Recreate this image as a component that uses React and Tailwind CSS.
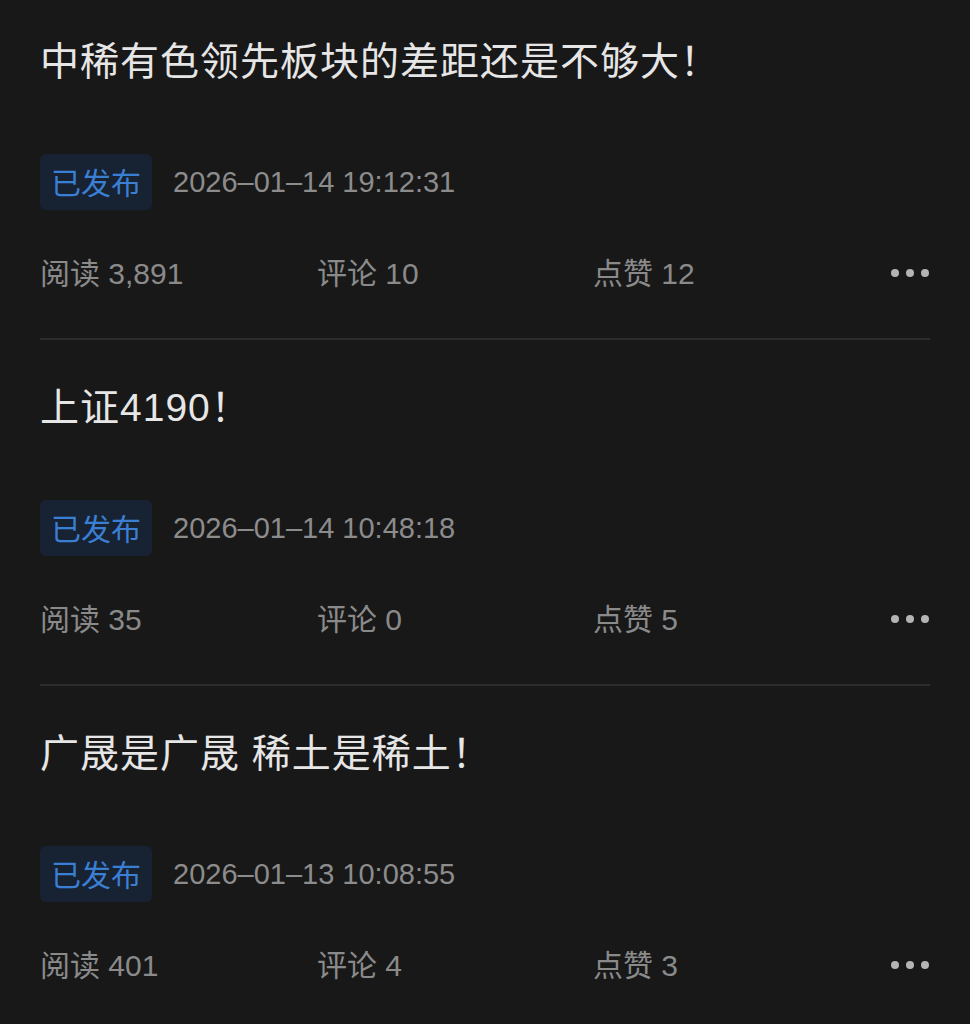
import React from 'react';

const posts = [
  { title: '中稀有色领先板块的差距还是不够大！', time: '2026–01–14 19:12:31', reads: '3,891', comments: '10', likes: '12' },
  { title: '上证4190！', time: '2026–01–14 10:48:18', reads: '35', comments: '0', likes: '5' },
  { title: '广晟是广晟 稀土是稀土！', time: '2026–01–13 10:08:55', reads: '401', comments: '4', likes: '3' },
];

const font = { fontFamily: '"Liberation Sans", "Noto Sans CJK SC", sans-serif' };

const PostItem = ({ post }) => {
  return (
    <div className="pb-[46px]">
      {/* title */}
      <h2 className="text-[39px] leading-[44px] tracking-[1px] text-[#e6e6e6] whitespace-nowrap">{post.title}</h2>

      {/* status + time */}
      <div className="mt-[70px] flex items-center h-[56px]">
        <span className="h-[56px] flex items-center pt-[3px] px-[11px] rounded-[6px] bg-[#172232] text-[#3b7fd4] text-[30px]">
          已发布
        </span>
        <span className="ml-[21px] pt-[2px] text-[29px] text-[#8c8c8c]">{post.time}</span>
      </div>

      {/* stats */}
      <div className="mt-[43px] flex items-center h-[40px] text-[30px] text-[#8a8a8a]">
        <div className="w-[277px]">阅读 {post.reads}</div>
        <div className="w-[276px]">评论 {post.comments}</div>
        <div className="flex-1">点赞 {post.likes}</div>
        <div className="flex items-center gap-[7px] pr-[1px]">
          <span className="w-[8px] h-[8px] rounded-full bg-[#b4b4b4]" />
          <span className="w-[8px] h-[8px] rounded-full bg-[#b4b4b4]" />
          <span className="w-[8px] h-[8px] rounded-full bg-[#b4b4b4]" />
        </div>
      </div>

      <div className="mt-[45px] h-[2px] bg-[#2c2c2c]" />
    </div>
  );
};

const App = () => {
  return (
    <div className="min-h-screen bg-[#181818] px-[40px] pt-[40px] overflow-hidden" style={font}>
      {posts.map((p, i) => (
        <PostItem key={i} post={p} />
      ))}
    </div>
  );
};

export default App;
